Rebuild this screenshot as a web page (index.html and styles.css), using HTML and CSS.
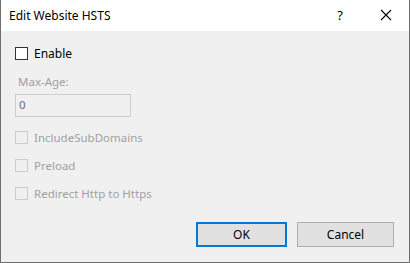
FILE: index.html
```html
<!DOCTYPE html>
<html lang="en">
<head>
  <meta charset="UTF-8">
  <meta name="viewport" content="width=device-width, initial-scale=1.0">
  <title>Edit Website HSTS</title>
  <link rel="stylesheet" href="styles.css">
</head>
<body>
  <div class="dialog">
    <div class="titlebar">
      <span class="title">Edit Website HSTS</span>
      <span class="help">?</span>
      <svg class="close" width="12" height="12" viewBox="0 0 12 12">
        <path d="M1 1 L11 11 M11 1 L1 11" stroke="#000" stroke-width="1.1" fill="none"/>
      </svg>
    </div>

    <div class="content">
      <label class="row enable">
        <span class="check"></span>
        <span class="text">Enable</span>
      </label>

      <div class="field">
        <span class="field__label">Max-Age:</span>
        <div class="field__input">0</div>
      </div>

      <label class="row disabled">
        <span class="check"></span>
        <span class="text">IncludeSubDomains</span>
      </label>
      <label class="row disabled">
        <span class="check"></span>
        <span class="text">Preload</span>
      </label>
      <label class="row disabled">
        <span class="check"></span>
        <span class="text">Redirect Http to Https</span>
      </label>
    </div>

    <div class="footer">
      <button class="btn btn--default">OK</button>
      <button class="btn btn--cancel">Cancel</button>
    </div>
  </div>
</body>
</html>
```

FILE: styles.css
```css
* { padding:0; margin:0; box-sizing:border-box; }

:root {
  --color-body: #f0f0f0;
  --color-text: #000000;
  --color-disabled: #a0a0a0;
  --color-disabled-border: #cccccc;
  --color-frame: #6e6e6e;
  --color-btn: #e1e1e1;
  --color-btn-border: #adadad;
  --color-focus: #0078d7;
  --font-size: 12px;
  --label-size: 11.5px;
}

body {
  font-family: "Noto Sans", "Liberation Sans", sans-serif;
  font-size: var(--font-size);
  color: var(--color-text);
  background-color: #ffffff;
}

.dialog {
  width: 410px;
  height: 263px;
  display: flex;
  flex-direction: column;
  background-color: var(--color-body);
  border: 1px solid var(--color-frame);
  border-top: none;
}

.titlebar {
  height: 31px;
  background-color: #ffffff;
  display: flex;
  align-items: center;
  padding-left: 8px;
  padding-bottom: 1px;
}

.title {
  flex: 1;
  font-size: 12px;
}

.help {
  font-size: 13px;
  margin-right: 37px;
}

.close {
  margin-right: 17px;
}

.content {
  flex: 1;
  padding: 16px 14px 0;
  display: flex;
  flex-direction: column;
  font-size: var(--label-size);
}

.row {
  display: flex;
  align-items: center;
  height: 13px;
  margin-bottom: 15px;
}

.check {
  width: 13px;
  height: 13px;
  border: 1px solid #333333;
  background-color: #ffffff;
  margin-right: 6px;
}

.text {
  line-height: 13px;
}

.enable .text {
  font-size: 12px;
}

.disabled .check {
  border-color: var(--color-disabled-border);
  background-color: var(--color-body);
}

.disabled .text {
  color: var(--color-disabled);
}

.enable {
  margin-bottom: 12px;
}

.field {
  display: flex;
  flex-direction: column;
  margin-bottom: 14px;
}

.field__label {
  color: var(--color-disabled);
  padding-left: 3px;
  line-height: 20px;
  margin-bottom: 2px;
}

.field__input {
  width: 116px;
  height: 23px;
  border: 1px solid var(--color-disabled-border);
  background-color: var(--color-body);
  color: #6d6d6d;
  padding-left: 3px;
  line-height: 20px;
}

.footer {
  display: flex;
  justify-content: flex-end;
  gap: 10px;
  padding: 0 15px 15px;
}

.btn {
  height: 25px;
  font-family: inherit;
  font-size: var(--font-size);
  color: var(--color-text);
  background-color: var(--color-btn);
  border: 1px solid var(--color-btn-border);
  outline: none;
}

.btn--default {
  width: 91px;
  border: 2px solid var(--color-focus);
}

.btn--cancel {
  width: 97px;
}
```
